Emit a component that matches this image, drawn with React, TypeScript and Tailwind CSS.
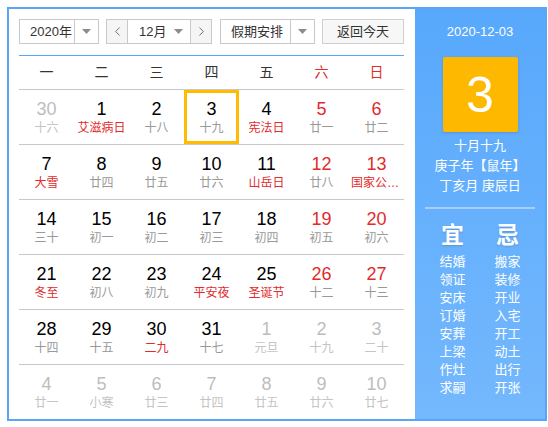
import { ChevronLeft, ChevronRight } from "lucide-react"

type Day = { n: number; l: string; red?: boolean; hol?: boolean; other?: boolean; today?: boolean }

const weeks: Day[][] = [
  [
    { n: 30, l: "十六", other: true },
    { n: 1, l: "艾滋病日", hol: true },
    { n: 2, l: "十八" },
    { n: 3, l: "十九", today: true },
    { n: 4, l: "宪法日", hol: true },
    { n: 5, l: "廿一", red: true },
    { n: 6, l: "廿二", red: true },
  ],
  [
    { n: 7, l: "大雪", hol: true },
    { n: 8, l: "廿四" },
    { n: 9, l: "廿五" },
    { n: 10, l: "廿六" },
    { n: 11, l: "山岳日", hol: true },
    { n: 12, l: "廿八", red: true },
    { n: 13, l: "国家公祭日", red: true, hol: true },
  ],
  [
    { n: 14, l: "三十" },
    { n: 15, l: "初一" },
    { n: 16, l: "初二" },
    { n: 17, l: "初三" },
    { n: 18, l: "初四" },
    { n: 19, l: "初五", red: true },
    { n: 20, l: "初六", red: true },
  ],
  [
    { n: 21, l: "冬至", hol: true },
    { n: 22, l: "初八" },
    { n: 23, l: "初九" },
    { n: 24, l: "平安夜", hol: true },
    { n: 25, l: "圣诞节", hol: true },
    { n: 26, l: "十二", red: true },
    { n: 27, l: "十三", red: true },
  ],
  [
    { n: 28, l: "十四" },
    { n: 29, l: "十五" },
    { n: 30, l: "二九", hol: true },
    { n: 31, l: "十七" },
    { n: 1, l: "元旦", other: true },
    { n: 2, l: "十九", other: true },
    { n: 3, l: "二十", other: true },
  ],
  [
    { n: 4, l: "廿一", other: true },
    { n: 5, l: "小寒", other: true },
    { n: 6, l: "廿三", other: true },
    { n: 7, l: "廿四", other: true },
    { n: 8, l: "廿五", other: true },
    { n: 9, l: "廿六", other: true },
    { n: 10, l: "廿七", other: true },
  ],
]

const weekdays = ["一", "二", "三", "四", "五", "六", "日"]
const yi = ["结婚", "领证", "安床", "订婚", "安葬", "上梁", "作灶", "求嗣"]
const ji = ["搬家", "装修", "开业", "入宅", "开工", "动土", "出行", "开张"]

function Caret() {
  return (
    <svg width="9" height="5" viewBox="0 0 9 5">
      <path d="M0 0 L9 0 L4.5 5 Z" fill="#8c8c8c" />
    </svg>
  )
}

export default function App() {
  return (
    <div className="min-h-screen bg-white pl-[7px] pt-[7px] text-[13px] text-[#333] [font-family:'Liberation_Sans','Noto_Sans_CJK_SC',sans-serif]">
      <div className="flex w-[540px] border-2 border-[#5aa6f5]">
        {/* calendar */}
        <div className="w-[406px] pl-[10px] pr-[11px] pt-[10px]">
          <div className="flex h-[25px] items-stretch">
            <div className="flex w-[80px] border border-[#c9c9c9]">
              <div className="flex flex-1 items-center pl-[10px]">2020年</div>
              <div className="flex w-[24px] items-center justify-center border-l border-[#c9c9c9]">
                <Caret />
              </div>
            </div>
            <div className="ml-[7px] flex w-[106px] border border-[#c9c9c9]">
              <div className="flex w-[21px] items-center justify-center border-r border-[#c9c9c9] bg-[#f5f5f5]">
                <ChevronLeft size={15} strokeWidth={1.3} color="#555" />
              </div>
              <div className="flex flex-1 items-center pl-[11px]">
                <span>12月</span>
                <span className="ml-[8px] flex">
                  <Caret />
                </span>
              </div>
              <div className="flex w-[21px] items-center justify-center border-l border-[#c9c9c9] bg-[#f5f5f5]">
                <ChevronRight size={15} strokeWidth={1.3} color="#555" />
              </div>
            </div>
            <div className="ml-[8px] flex w-[95px] border border-[#c9c9c9]">
              <div className="flex flex-1 items-center pl-[10px]">假期安排</div>
              <div className="flex w-[24px] items-center justify-center border-l border-[#c9c9c9]">
                <Caret />
              </div>
            </div>
            <div className="ml-[7px] flex w-[82px] items-center justify-center border border-[#cfcfcf] bg-[#f7f7f7]">
              返回今天
            </div>
          </div>

          <div className="mt-[11px] grid h-[35px] grid-cols-7 border-y border-t-[#5aa6f5] border-b-[#c8c8c8] text-[14px]">
            {weekdays.map((w, i) => (
              <div
                key={w}
                className={`flex items-center justify-center ${i >= 5 ? "text-[#e22b2b]" : "text-[#333]"}`}
              >
                {w}
              </div>
            ))}
          </div>

          {weeks.map((week, r) => (
            <div
              key={r}
              className={`grid grid-cols-7 ${r < 5 ? "h-[55px] border-b border-[#c8c8c8]" : "h-[54px]"}`}
            >
              {week.map((d, c) => {
                const numColor = d.other ? "text-[#bdbdbd]" : d.red ? "text-[#e22b2b]" : "text-black"
                const lunarColor = d.other ? "text-[#c4c4c4]" : d.hol ? "text-[#e22b2b]" : "text-[#999]"
                return (
                  <div
                    key={c}
                    className={`flex min-w-0 flex-col items-center justify-center ${d.today ? "border-[3px] border-[#ffbb00]" : ""}`}
                  >
                    <div className={`text-[18px] leading-[20px] ${numColor}`}>{d.n}</div>
                    <div className={`mt-px w-full truncate px-[2px] text-center text-[12px] leading-[16px] ${lunarColor}`}>
                      {d.l}
                    </div>
                  </div>
                )
              })}
            </div>
          ))}
        </div>

        {/* detail panel */}
        <div className="flex w-[130px] flex-col items-center bg-gradient-to-b from-[#57a8fc] to-[#74b8fd] pt-[14px] text-white">
          <div className="leading-[18px]">2020-12-03</div>
          <div className="mt-[16px] flex h-[75px] w-[75px] items-center justify-center rounded-[2px] bg-[#ffb800] text-[50px] leading-none shadow-[0_1px_3px_rgba(0,0,0,0.15)]">
            3
          </div>
          <div className="mt-[4px] text-center leading-[20px]">
            <div>十月十九</div>
            <div>庚子年【鼠年】</div>
            <div>丁亥月 庚辰日</div>
          </div>
          <div className="mt-[11px] h-[2px] w-[110px] bg-[#a6cffb]" />
          <div className="mt-[12px] flex w-[110px]">
            <div className="flex w-[55px] flex-col items-center">
              <div className="text-[23px] font-bold leading-[28px] [text-shadow:0_1px_2px_rgba(0,0,0,0.15)]">宜</div>
              <div className="mt-[4px] flex flex-col items-center leading-[18px]">
                {yi.map((t) => (
                  <div key={t}>{t}</div>
                ))}
              </div>
            </div>
            <div className="flex w-[55px] flex-col items-center">
              <div className="text-[23px] font-bold leading-[28px] [text-shadow:0_1px_2px_rgba(0,0,0,0.15)]">忌</div>
              <div className="mt-[4px] flex flex-col items-center leading-[18px]">
                {ji.map((t) => (
                  <div key={t}>{t}</div>
                ))}
              </div>
            </div>
          </div>
        </div>
      </div>
    </div>
  )
}
